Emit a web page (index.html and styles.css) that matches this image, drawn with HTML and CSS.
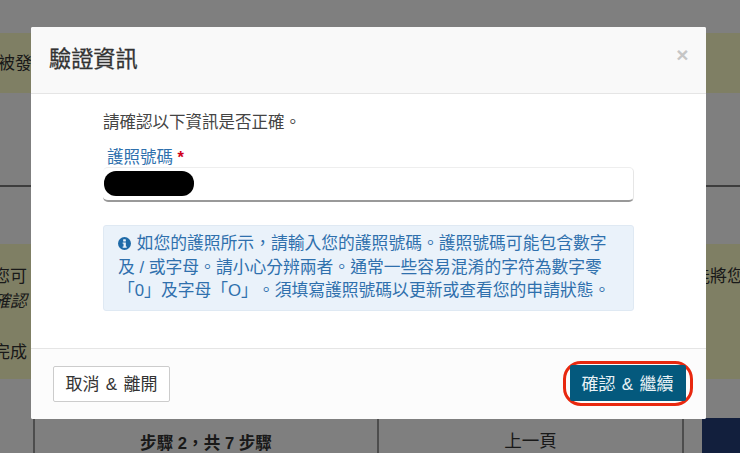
FILE: index.html
```html
<!DOCTYPE html>
<html lang="zh-Hant">
<head>
    <meta charset="UTF-8">
    <title>驗證資訊</title>
    <link rel="stylesheet" href="styles.css">
</head>
<body>
    <!-- page behind the dialog -->
    <div class="page">
        <div class="band band-top">
            <span class="band-text band-text-top">被發</span>
        </div>
        <div class="rule"></div>
        <div class="band band-main">
            <div class="band-row">
                <span class="band-text band-text-left">您可</span>
                <span class="band-text">能將您</span>
            </div>
            <div class="band-text band-text-left band-em">確認</div>
            <div class="band-text band-text-left band-last">完成</div>
        </div>
        <div class="steps">
            <div class="steps-table">
                <div class="steps-count">步驟 2，共 7 步驟</div>
                <div class="steps-prev">上一頁</div>
            </div>
            <div class="steps-next"></div>
        </div>
    </div>
    <div class="overlay"></div>

    <div class="modal">
        <div class="modal-header">
            <h4 class="modal-title">驗證資訊</h4>
            <span class="modal-close">×</span>
        </div>
        <div class="modal-body">
            <p class="intro">請確認以下資訊是否正確。</p>
            <label class="field-label">護照號碼 <span class="required">*</span></label>
            <div class="field-input">
                <span class="redacted"></span>
            </div>
            <div class="info-box">
                <svg class="info-icon" viewBox="0 0 24 24" width="13" height="13">
                    <circle cx="12" cy="12" r="12" fill="#1e6aa8"/>
                    <rect x="9.5" y="4" width="5" height="4.2" rx="1" fill="#eaf2fa"/>
                    <path d="M8.6 10.2h5.9v7.4h1.6v2.4H8.6v-2.4h1.6v-5H8.6z" fill="#eaf2fa"/>
                </svg>
                如您的護照所示，請輸入您的護照號碼。護照號碼可能包含數字<br>
                及 / 或字母。請小心分辨兩者。通常一些容易混淆的字符為數字零<br>
                「0」及字母「O」。須填寫護照號碼以更新或查看您的申請狀態。
            </div>
        </div>
        <div class="modal-footer">
            <button class="btn btn-cancel">取消 &amp; 離開</button>
            <div class="btn-ring">
                <button class="btn btn-confirm">確認 &amp; 繼續</button>
            </div>
        </div>
    </div>
</body>
</html>
```

FILE: styles.css
```css
* {
    margin: 0;
    padding: 0;
    box-sizing: border-box;
}
html, body {
    width: 740px;
    height: 453px;
    overflow: hidden;
}
body {
    position: relative;
    background: #fff;
    color: #333;
    font-family: "Liberation Sans", "Noto Sans CJK TC", sans-serif;
    font-size: 17px;
    text-spacing-trim: space-all;
}

/* page behind the dialog */
.page {
    height: 453px;
    padding-top: 33px;
    overflow: hidden;
}
.band {
    background: #ffffc8;
}
.band-top {
    height: 60px;
    padding-top: 19px;
    line-height: 24px;
}
.rule {
    height: 2px;
    margin-top: 92px;
    background: #7a7a7a;
}
.band-main {
    height: 135px;
    margin-top: 57px;
    padding-top: 20px;
    line-height: 25px;
}
.band-row {
    display: flex;
    justify-content: space-between;
}
.band-text {
    display: block;
}
.band-text-top {
    margin-left: -2px;
}
.band-text-left {
    margin-left: -7px;
}
.band-em {
    font-style: italic;
}
.band-last {
    margin-top: 26px;
}
.band-row .band-text:last-child {
    margin-right: -4px;
}
.steps {
    display: flex;
    height: 40px;
    margin-top: 40px;
    padding-left: 33px;
}
.steps-table {
    display: flex;
    width: 651px;
    height: 40px;
    border-left: 2px solid #9a9a9a;
    border-right: 2px solid #9a9a9a;
    line-height: 44px;
    text-align: center;
}
.steps-count {
    width: 344px;
    border-right: 2px solid #9a9a9a;
    font-size: 16.6px;
    font-weight: bold;
    line-height: 50px;
}
.steps-prev {
    flex: 1;
    font-size: 17.5px;
}
.steps-next {
    width: 38px;
    height: 40px;
    margin-left: 18px;
    margin-top: -1px;
    background: #243e7a;
}
.overlay {
    position: absolute;
    top: 0;
    left: 0;
    width: 740px;
    height: 453px;
    background: rgba(0, 0, 0, .5);
}

/* dialog */
.modal {
    position: absolute;
    top: 27px;
    left: 31px;
    display: flex;
    flex-direction: column;
    width: 674.5px;
    height: 392px;
    background: #fff;
    border-radius: 2px;
    overflow: hidden;
}
.modal-header {
    display: flex;
    justify-content: space-between;
    height: 67px;
    padding: 18px 17px 0 18px;
    background: #f9f9f9;
    border-bottom: 1px solid #e5e5e5;
}
.modal-title {
    font-size: 22.2px;
    font-weight: normal;
    line-height: 30px;
    color: #333;
    -webkit-text-stroke: .3px #333;
}
.modal-close {
    margin-top: -5px;
    font-size: 21px;
    font-weight: bold;
    line-height: 30px;
    color: #c6c6c6;
}
.modal-body {
    flex: 1;
    padding: 16px 72px 0;
}
.intro {
    font-size: 16.5px;
    line-height: 24px;
    color: #444;
}
.field-label {
    display: block;
    margin: 12px 0 0 4px;
    font-size: 16.5px;
    line-height: 22px;
    color: #2f70ad;
}
.required {
    color: #d0021b;
    font-weight: bold;
}
.field-input {
    height: 35px;
    margin-top: -1px;
    border-right: 1px solid #e6e6e6;
    border-top: 1px solid #eee;
    border-bottom: 2px solid #999;
    border-radius: 5px;
    padding: 3px 0 0 1px;
}
.redacted {
    display: block;
    width: 90px;
    height: 25px;
    background: #000;
    border-radius: 12px;
}
.info-box {
    margin-top: 23px;
    height: 86px;
    padding: 6px 14px 0;
    background: #eaf2fa;
    border: 1px solid #dfe9f3;
    border-radius: 3px;
    font-size: 16.8px;
    line-height: 23.5px;
    color: #2f70ad;
    white-space: nowrap;
}
.info-icon {
    vertical-align: -1px;
    margin-right: 1px;
}
.modal-footer {
    display: flex;
    justify-content: space-between;
    align-items: center;
    height: 71px;
    padding: 0 13px 0 22px;
    background: #fcfcfc;
    border-top: 1px solid #e5e5e5;
}
.btn {
    height: 36px;
    font-family: inherit;
    font-size: 17px;
    word-spacing: 1.5px;
    border-radius: 2px;
}
.btn-cancel {
    width: 117px;
    padding-bottom: 3px;
    background: #fff;
    color: #333;
    border: 1px solid #ccc;
}
.btn-ring {
    margin-bottom: 2px;
    padding: 1.5px 4px;
    border: 3.5px solid #e8280f;
    border-radius: 18px;
}
.btn-confirm {
    display: block;
    width: 116px;
    padding-bottom: 2px;
    background: #04597d;
    color: #e8f2f6;
    border: 0;
}
```
